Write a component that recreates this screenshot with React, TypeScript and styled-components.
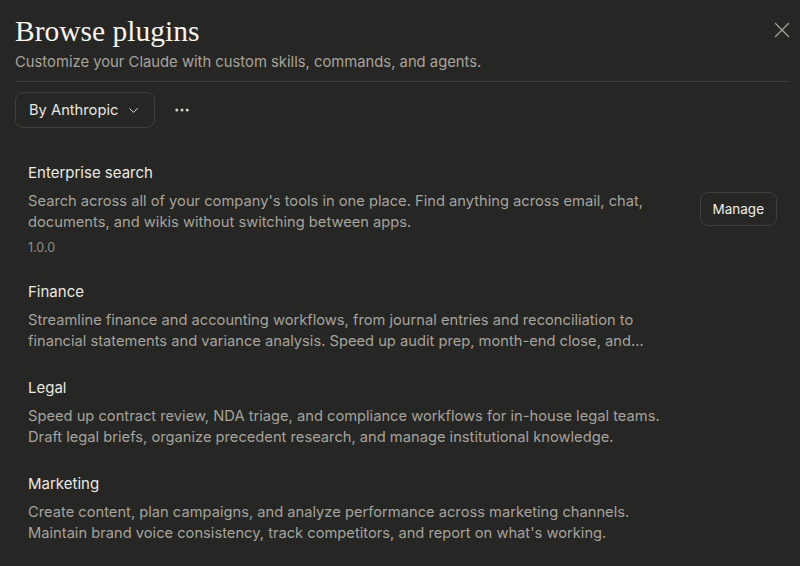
import React from 'react';
import styled, { createGlobalStyle } from 'styled-components';
import { ChevronDown, Ellipsis, X } from 'lucide-react';

const GlobalStyle = createGlobalStyle`
  html, body {
    margin: 0;
    padding: 0;
    background: #262624;
  }
  body {
    font-family: Inter, "Noto Sans", sans-serif;
    -webkit-font-smoothing: antialiased;
  }
`;

const Panel = styled.div`
  width: 800px;
  height: 566px;
  overflow: hidden;
  box-sizing: border-box;
  padding: 14px 10px 0 15px;
  background: #262624;
  color: #e9e7e1;
`;

const Header = styled.header`
  display: flex;
  justify-content: space-between;
  align-items: flex-start;
  border-bottom: 1px solid #3b3b38;
  padding-bottom: 9px;
`;

const Title = styled.h1`
  margin: 0;
  font-family: "Liberation Serif", "DejaVu Serif", serif;
  font-weight: 400;
  font-size: 29.5px;
  line-height: 34px;
  color: #f5f4ee;
`;

const Subtitle = styled.p`
  margin: 4px 0 0;
  font-size: 14.8px;
  line-height: 20px;
  color: #a6a49d;
`;

const CloseButton = styled.button`
  appearance: none;
  background: transparent;
  border: none;
  padding: 0;
  margin: 3px -5px 0 0;
  color: #a6a49d;
  display: flex;
`;

const Toolbar = styled.div`
  display: flex;
  align-items: center;
  gap: 18px;
  margin-top: 10px;
`;

const FilterButton = styled.button`
  appearance: none;
  display: flex;
  align-items: center;
  gap: 8px;
  height: 36px;
  padding: 0 13px;
  background: #262624;
  border: 1px solid #3f3e3b;
  border-radius: 8px;
  color: #e9e7e1;
  font-family: inherit;
  font-size: 14.7px;
`;

const MoreButton = styled.button`
  appearance: none;
  background: transparent;
  border: none;
  padding: 0;
  color: #d6d4cd;
  display: flex;
`;

const List = styled.ul`
  list-style: none;
  margin: 34px 0 0;
  padding: 0 13px 0 13px;
  display: flex;
  flex-direction: column;
  gap: 25px;
`;

const Item = styled.li`
  display: flex;
  align-items: center;
  gap: 24px;
`;

const ItemBody = styled.div`
  flex: 1;
  min-width: 0;
  max-width: 650px;
`;

const ItemTitle = styled.h3`
  margin: 0 0 7px;
  font-size: 15px;
  font-weight: 400;
  line-height: 22px;
  color: #ebe9e3;
`;

const Description = styled.p`
  margin: 0;
  font-size: 14.7px;
  line-height: 21px;
  color: #a5a39d;
  display: -webkit-box;
  -webkit-line-clamp: 2;
  -webkit-box-orient: vertical;
  overflow: hidden;
`;

const Version = styled.div`
  margin-top: 7px;
  font-size: 12.5px;
  line-height: 16px;
  color: #8f8d87;
`;

const ManageButton = styled.button`
  appearance: none;
  flex-shrink: 0;
  margin-left: auto;
  height: 34px;
  padding: 0 12px;
  background: #262624;
  border: 1px solid #3f3e3b;
  border-radius: 8px;
  color: #f0eee8;
  font-family: inherit;
  font-size: 13.5px;
`;

type Plugin = {
  name: string;
  description: string;
  version?: string;
  installed?: boolean;
};

const plugins: Plugin[] = [
  {
    name: 'Enterprise search',
    description:
      "Search across all of your company's tools in one place. Find anything across email, chat, documents, and wikis without switching between apps.",
    version: '1.0.0',
    installed: true,
  },
  {
    name: 'Finance',
    description:
      'Streamline finance and accounting workflows, from journal entries and reconciliation to financial statements and variance analysis. Speed up audit prep, month-end close, and…',
  },
  {
    name: 'Legal',
    description:
      'Speed up contract review, NDA triage, and compliance workflows for in-house legal teams. Draft legal briefs, organize precedent research, and manage institutional knowledge.',
  },
  {
    name: 'Marketing',
    description:
      "Create content, plan campaigns, and analyze performance across marketing channels. Maintain brand voice consistency, track competitors, and report on what's working.",
  },
];

const App = () => (
  <Panel>
    <GlobalStyle />
    <Header>
      <div>
        <Title>Browse plugins</Title>
        <Subtitle>Customize your Claude with custom skills, commands, and agents.</Subtitle>
      </div>
      <CloseButton aria-label="Close">
        <X size={26} strokeWidth={1.1} />
      </CloseButton>
    </Header>

    <Toolbar>
      <FilterButton>
        By Anthropic
        <ChevronDown size={15} strokeWidth={1.5} />
      </FilterButton>
      <MoreButton aria-label="More">
        <Ellipsis size={18} strokeWidth={2} />
      </MoreButton>
    </Toolbar>

    <List>
      {plugins.map((p) => (
        <Item key={p.name}>
          <ItemBody>
            <ItemTitle>{p.name}</ItemTitle>
            <Description>{p.description}</Description>
            {p.version && <Version>{p.version}</Version>}
          </ItemBody>
          {p.installed && <ManageButton>Manage</ManageButton>}
        </Item>
      ))}
    </List>
  </Panel>
);

export default App;
